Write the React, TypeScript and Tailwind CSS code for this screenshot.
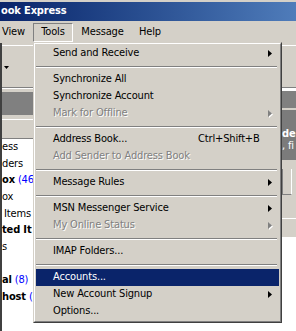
import clsx from "clsx";

type Entry =
  | { sep: true }
  | { sep?: false; label: string; shortcut?: string; sub?: boolean; disabled?: boolean; active?: boolean };

const toolsMenu: Entry[] = [
  { label: "Send and Receive", sub: true },
  { sep: true },
  { label: "Synchronize All" },
  { label: "Synchronize Account" },
  { label: "Mark for Offline", sub: true, disabled: true },
  { sep: true },
  { label: "Address Book...", shortcut: "Ctrl+Shift+B" },
  { label: "Add Sender to Address Book", disabled: true },
  { sep: true },
  { label: "Message Rules", sub: true },
  { sep: true },
  { label: "MSN Messenger Service", sub: true },
  { label: "My Online Status", sub: true, disabled: true },
  { sep: true },
  { label: "IMAP Folders..." },
  { sep: true },
  { label: "Accounts...", active: true },
  { label: "New Account Signup", sub: true },
  { label: "Options..." },
];

// folder tree rows, only their right ends show past the window edge
const folders: { text: string; bold?: boolean; count?: string; indent?: boolean }[] = [
  { text: "ess" },
  { text: "ders" },
  { text: "ox", bold: true, count: "(46)" },
  { text: "ox" },
  { text: "Items", indent: true },
  { text: "ted It", bold: true },
  { text: "s" },
  { text: "" },
  { text: "al", bold: true, count: "(8)" },
  { text: "host", bold: true, count: "(" },
];

function Arrow({ disabled }: { disabled?: boolean }) {
  if (disabled) {
    return (
      <svg width="5" height="8" viewBox="0 0 5 8" aria-hidden>
        <polygon points="1,1 5,4.5 1,8" fill="#ffffff" />
        <polygon points="0,0 4,3.5 0,7" fill="#808080" />
      </svg>
    );
  }
  return (
    <svg width="5" height="8" viewBox="0 0 5 8" aria-hidden>
      <polygon points="0,0 4,3.5 0,7" fill="currentColor" />
    </svg>
  );
}

function MenuItem({ item }: { item: Exclude<Entry, { sep: true }> }) {
  return (
    <div
      className={clsx(
        "mx-px flex h-[17px] items-center pl-[17px] pr-[6px]",
        item.active ? "bg-[#0a246a] text-white" : item.disabled ? "text-[#808080]" : "text-black",
      )}
    >
      <span
        className={clsx("w-[145px] shrink-0 whitespace-nowrap", item.disabled && "[text-shadow:1px_1px_0_#ffffff]")}
      >
        {item.label}
      </span>
      {item.shortcut && <span className="whitespace-nowrap">{item.shortcut}</span>}
      {item.sub && (
        <span className="ml-auto flex">
          <Arrow disabled={item.disabled} />
        </span>
      )}
    </div>
  );
}

function Separator() {
  return (
    <div className="ml-px mr-[3px] h-[9px] pt-[4px]">
      <div className="h-px bg-[#808080]" />
      <div className="h-px bg-white" />
    </div>
  );
}

export default function App() {
  return (
    <div className="relative h-[331px] w-[296px] overflow-hidden bg-[#d4d0c8] font-['DejaVu_Sans_Condensed','DejaVu_Sans',sans-serif] text-[11px] tracking-[-0.15px] text-black">
      {/* window frame + title bar */}
      <div className="h-[2px] bg-[#d4d0c8]" />
      <div className="flex h-[19px] items-center bg-gradient-to-r from-[#0a246a] to-[#4f7cba] pl-[1px] font-bold text-white">
        ook Express
      </div>

      {/* menu bar */}
      <div className="flex h-[22px] items-center">
        <span className="w-[27px] text-center">View</span>
        <span className="ml-[6px] flex h-[19px] w-[40px] items-center justify-center border-t border-l border-[#808080] border-r-white border-b-white border-r border-b">
          Tools
        </span>
        <span className="ml-[4px] w-[51px] text-center">Message</span>
        <span className="ml-[6px] w-[32px] text-center">Help</span>
      </div>

      {/* everything below the menu bar */}
      <div className="flex h-[288px]">
        <div className="w-[2px] bg-[#404040]" />
        <div className="flex flex-1 flex-col">
          {/* toolbar */}
          <div className="flex h-[46px] flex-col">
            <div className="h-[2px]" />
            <div className="h-px bg-white" />
            <div className="flex-1 pl-[2px] pt-[20px]">
              <svg width="5" height="3" viewBox="0 0 5 3" aria-hidden>
                <polygon points="0,0 5,0 2.5,3" fill="#000" />
              </svg>
            </div>
            <div className="h-px bg-[#808080]" />
            <div className="h-px bg-white" />
          </div>

          <div className="flex flex-1">
            {/* folder pane */}
            <div className="flex w-[31px] flex-col">
              <div className="h-[3px]" />
              <div className="h-[23px] bg-[#808080]" />
              <div className="h-[4px]" />
              <div className="h-px bg-white" />
              <div className="h-[18px]" />
              <div className="h-px bg-[#808080]" />
              <div className="flex flex-1 flex-col bg-white">
                {folders.map((f, i) => (
                  <div key={i} className={clsx("flex h-[16.67px] items-center whitespace-nowrap", f.indent && "pl-[2px]")}>
                    <span className={clsx(f.bold && "font-bold")}>{f.text}</span>
                    {f.count && <span className="ml-[3px] text-[#0000ff]">{f.count}</span>}
                  </div>
                ))}
              </div>
            </div>

            <div className="flex-1 bg-white" />

            {/* message pane edge */}
            <div className="flex w-[14px] flex-col">
              <div className="h-[2px] bg-white" />
              <div className="h-[17px] bg-[#808080]" />
              <div className="h-[2px]" />
              <div className="flex h-[50px] flex-col bg-[#7b7b7b] pt-[17px] text-white">
                <span className="h-[13px] whitespace-nowrap font-bold leading-[13px]">de</span>
                <span className="whitespace-nowrap leading-[12px]">, fi</span>
              </div>
              <div className="h-[9px]" />
              <div className="h-[26px] w-[10px] border-b border-l border-[#808080] border-r border-r-white" />
              <div className="h-[23px]" />
              <div className="h-px bg-white" />
              <div className="h-[18px]" />
              <div className="flex-1 bg-white" />
            </div>
          </div>
        </div>
      </div>

      {/* open Tools menu */}
      <div className="absolute top-[42px] left-[33px] w-[249px] border-t border-l border-[#d4d0c8] border-r-[#404040] border-b-[#404040] border-r border-b bg-[#d4d0c8]">
        <div className="border-t border-l border-white border-r-[#808080] border-b-[#808080] border-r border-b py-px">
          {toolsMenu.map((item, i) => (item.sep ? <Separator key={i} /> : <MenuItem key={i} item={item} />))}
        </div>
      </div>
    </div>
  );
}
